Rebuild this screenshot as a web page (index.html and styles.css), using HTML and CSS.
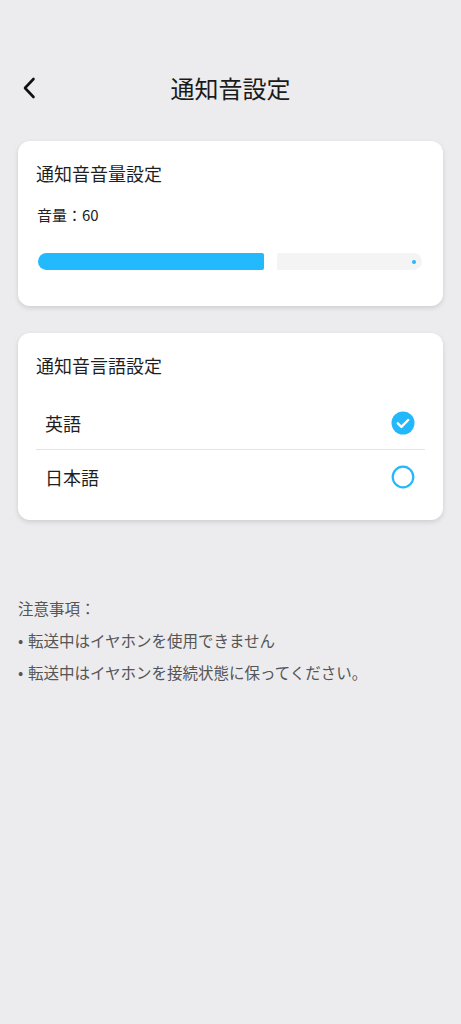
FILE: index.html
```html
<!DOCTYPE html>
<html lang="ja">
<head>
<meta charset="utf-8">
<title>通知音設定</title>
<link rel="stylesheet" href="styles.css">
</head>
<body>
<div class="page">
  <header class="header">
    <button class="back" aria-label="戻る">
      <svg width="14" height="22" viewBox="0 0 14 22"><path d="M11.5 2 L3 11 L11.5 20" fill="none" stroke="#111" stroke-width="2.6" stroke-linecap="round" stroke-linejoin="round"/></svg>
    </button>
    <h1 class="title">通知音設定</h1>
  </header>

  <section class="card card-volume">
    <h2 class="card-title">通知音音量設定</h2>
    <p class="volume-label">音量：60</p>
    <div class="slider">
      <div class="slider-fill"></div>
      <div class="slider-track"><span class="slider-dot"></span></div>
    </div>
  </section>

  <section class="card card-lang">
    <h2 class="card-title">通知音言語設定</h2>
    <div class="options">
      <div class="option">
        <span class="option-label">英語</span>
        <svg class="radio" width="24" height="24" viewBox="0 0 24 24"><circle cx="12" cy="12" r="11.5" fill="#22b8fb"/><path d="M6.8 12.3 L10.4 15.8 L17.2 9" fill="none" stroke="#fff" stroke-width="2.4" stroke-linecap="round" stroke-linejoin="round"/></svg>
      </div>
      <div class="option">
        <span class="option-label">日本語</span>
        <svg class="radio" width="24" height="24" viewBox="0 0 24 24"><circle cx="12" cy="12" r="10.3" fill="none" stroke="#22b8fb" stroke-width="2.2"/></svg>
      </div>
    </div>
  </section>

  <section class="notes">
    <p class="note-head">注意事項：</p>
    <p class="note"><span class="bullet">•</span>転送中はイヤホンを使用できません</p>
    <p class="note"><span class="bullet">•</span>転送中はイヤホンを接続状態に保ってください。</p>
  </section>
</div>
</body>
</html>
```

FILE: styles.css
```css
* { box-sizing: border-box; }
html, body {
  margin: 0;
  padding: 0;
  background: #ececee;
}
body {
  font-family: "Noto Sans CJK JP", "Noto Sans", sans-serif;
  color: #1f1f1f;
  width: 461px;
  min-height: 1024px;
}
.page {
  display: flex;
  flex-direction: column;
}
.header {
  position: relative;
  height: 48px;
  margin-top: 64px;
  display: flex;
  align-items: center;
  justify-content: center;
}
.back {
  position: absolute;
  left: 22px;
  top: 13px;
  width: 20px;
  height: 22px;
  padding: 0;
  border: 0;
  background: none;
  display: flex;
  align-items: center;
}
.title {
  margin: 0;
  font-size: 24px;
  font-weight: 400;
  line-height: 32px;
  color: #1a1a1a;
}
.card {
  background: #fff;
  margin: 0 18px;
  border-radius: 12px;
  box-shadow: 0 2px 5px rgba(0, 0, 0, 0.13);
  padding: 20px 18px 0;
}
.card-volume {
  margin-top: 29px;
  padding-bottom: 36px;
}
.card-lang {
  margin-top: 27px;
  padding-bottom: 17px;
}
.card-title {
  margin: 0;
  font-size: 18px;
  font-weight: 400;
  line-height: 24px;
  color: #1f1f1f;
}
.volume-label {
  margin: 19px 0 0 1px;
  font-size: 15px;
  line-height: 22px;
  color: #222;
}
.slider {
  margin: 27px 3px 0 2px;
  height: 17px;
  display: flex;
  gap: 13px;
}
.slider-fill {
  width: 226px;
  background: #22b9fd;
  border-radius: 9px 2px 2px 9px;
}
.slider-track {
  flex: 1;
  background: #f4f4f4;
  border-radius: 2px 9px 9px 2px;
  display: flex;
  align-items: center;
  justify-content: flex-end;
  padding-right: 6px;
}
.slider-dot {
  width: 4px;
  height: 4px;
  border-radius: 50%;
  background: #22b9fd;
}
.options {
  margin-top: 19px;
  display: flex;
  flex-direction: column;
}
.option {
  height: 53px;
  display: flex;
  align-items: center;
  justify-content: space-between;
  padding: 0 10px 0 9px;
}
.option + .option {
  border-top: 1px solid #e4e4e4;
  height: 54px;
}
.option-label {
  font-size: 18px;
  line-height: 24px;
  color: #1f1f1f;
}
.radio { display: block; }
.notes {
  margin-top: 72px;
  padding: 0 18px;
}
.notes p {
  margin: 0;
  font-size: 15.5px;
  line-height: 32px;
  color: #555;
}
.bullet {
  display: inline-block;
  width: 10px;
}
```
